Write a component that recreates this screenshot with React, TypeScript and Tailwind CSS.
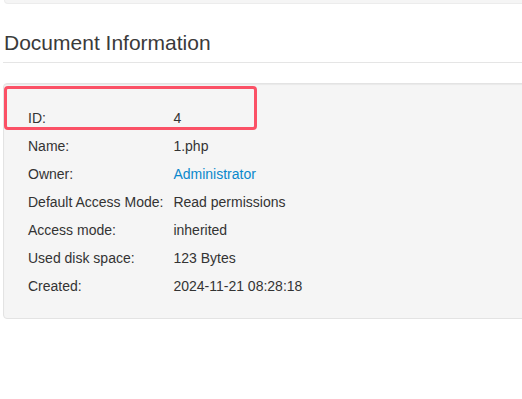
import type React from "react"

interface InfoRow {
  label: string
  value: string
  link?: boolean
}

const rows: InfoRow[] = [
  { label: "ID:", value: "4" },
  { label: "Name:", value: "1.php" },
  { label: "Owner:", value: "Administrator", link: true },
  { label: "Default Access Mode:", value: "Read permissions" },
  { label: "Access mode:", value: "inherited" },
  { label: "Used disk space:", value: "123 Bytes" },
  { label: "Created:", value: "2024-11-21 08:28:18" },
]

const App: React.FC = () => {
  return (
    <div
      className="relative w-[522px] h-[399px] overflow-hidden bg-white text-[#333]"
      style={{ fontFamily: '"Liberation Sans", Arial, sans-serif' }}
    >
      <div className="w-[580px] pl-[3px]">
        {/* bottom of the previous panel */}
        <div className="h-[4px] ml-px bg-[#f5f5f5] border border-t-0 border-[#ececec] rounded-b-[4px]" />

        <h3 className="mt-[27px] pb-[7px] pl-px text-[21px] leading-[24px] font-normal text-[#3a3a3a] border-b border-[#e5e5e5]">
          Document Information
        </h3>

        <div className="mt-[20px] bg-[#f5f5f5] border border-[#e3e3e3] rounded-[4px] pt-[20px] pb-[18px] px-[19px] shadow-[inset_0_1px_1px_rgba(0,0,0,0.05)]">
          <table className="text-[14px] leading-[20px] border-collapse">
            <tbody>
              {rows.map((row) => (
                <tr key={row.label}>
                  <td className="py-[4px] px-[5px] whitespace-nowrap">{row.label}</td>
                  <td className="py-[4px] px-[5px] whitespace-nowrap">
                    {row.link ? (
                      <a href="#" className="text-[#0a88cc]">
                        {row.value}
                      </a>
                    ) : (
                      row.value
                    )}
                  </td>
                </tr>
              ))}
            </tbody>
          </table>
        </div>
      </div>

      {/* highlight annotation */}
      <div className="absolute left-[4px] top-[86px] w-[253px] h-[44px] border-[3px] border-[#fb5166] rounded-[4px]" />
    </div>
  )
}

export default App
